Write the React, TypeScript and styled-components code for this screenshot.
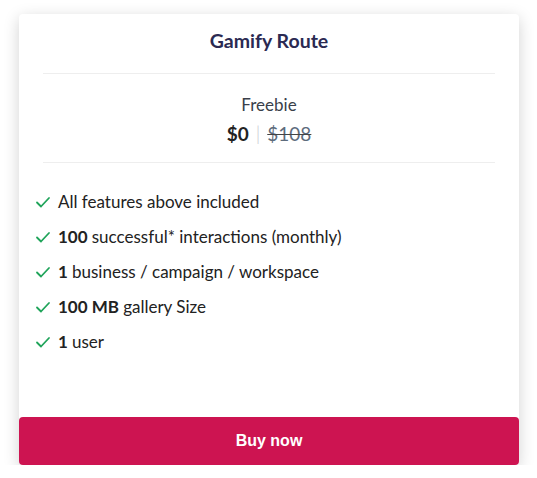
import React from "react";
import styled, { createGlobalStyle } from "styled-components";

const GlobalStyle = createGlobalStyle`
  body {
    margin: 0;
    background: #ffffff;
    font-family: "Lato", "Open Sans", sans-serif;
  }
`;

type Feature = { strong?: string; text: string };

const features: Feature[] = [
  { text: "All features above included" },
  { strong: "100", text: "successful* interactions (monthly)" },
  { strong: "1", text: "business / campaign / workspace" },
  { strong: "100 MB", text: "gallery Size" },
  { strong: "1", text: "user" },
];

const Check = () => (
  <svg width="16" height="16" viewBox="0 0 16 16" fill="none">
    <path d="M2 8.5l4 4 8-8.5" stroke="#1fa45a" strokeWidth="1.8" strokeLinecap="round" strokeLinejoin="round" />
  </svg>
);

const App = () => {
  return (
    <>
      <GlobalStyle />
      <Page>
        <Card>
          <Title>Gamify Route</Title>
          <Divider />
          <PlanBlock>
            <PlanName>Freebie</PlanName>
            <PriceRow>
              <Price>$0</Price>
              <Sep>|</Sep>
              <OldPrice>$108</OldPrice>
            </PriceRow>
          </PlanBlock>
          <Divider />
          <FeatureList>
            {features.map((f, i) => (
              <FeatureItem key={i}>
                <Check />
                <span>
                  {f.strong && <b>{f.strong} </b>}
                  {f.text}
                </span>
              </FeatureItem>
            ))}
          </FeatureList>
          <BuyButton>Buy now</BuyButton>
        </Card>
      </Page>
    </>
  );
};
export default App;

const Page = styled.div`
  display: flex;
  justify-content: center;
  padding: 14px 0 0 1px;
`;

const Card = styled.div`
  width: 500px;
  height: 451px;
  background: #ffffff;
  border-radius: 4px;
  box-shadow: 0 4px 16px rgba(0, 0, 0, 0.18);
  display: flex;
  flex-direction: column;
`;

const Title = styled.div`
  text-align: center;
  font-size: 19.5px;
  line-height: 24px;
  font-weight: 700;
  color: #2b2a52;
  padding: 15px 0 20px;
`;

const Divider = styled.div`
  height: 1px;
  background: #eeeeee;
  margin: 0 24px;
`;

const PlanBlock = styled.div`
  display: flex;
  flex-direction: column;
  align-items: center;
  padding: 20px 0 16px;
`;

const PlanName = styled.div`
  font-size: 17px;
  line-height: 22px;
  color: #3a3f4a;
  font-weight: 400;
`;

const PriceRow = styled.div`
  display: flex;
  align-items: center;
  gap: 7px;
  font-size: 19px;
  line-height: 24px;
  margin-top: 6px;
`;

const Price = styled.span`
  font-weight: 700;
  color: #222;
`;

const Sep = styled.span`
  color: #c8c8d0;
  font-weight: 300;
`;

const OldPrice = styled.span`
  color: #5d6b7c;
  font-weight: 400;
  text-decoration: line-through;
  text-decoration-color: #444;
`;

const FeatureList = styled.ul`
  list-style: none;
  margin: 0;
  padding: 29px 0 0 16px;
  flex: 1;
  display: flex;
  flex-direction: column;
  gap: 15px;
`;

const FeatureItem = styled.li`
  display: flex;
  align-items: center;
  gap: 7px;
  font-size: 17px;
  line-height: 20px;
  color: #222;
  font-weight: 400;
  b {
    font-weight: 700;
  }
`;

const BuyButton = styled.button`
  height: 48px;
  border: none;
  border-radius: 4px;
  background: #cd1451;
  color: #ffffff;
  font-family: "Liberation Sans", Arial, sans-serif;
  font-size: 16px;
  font-weight: 700;
  cursor: pointer;
`;
